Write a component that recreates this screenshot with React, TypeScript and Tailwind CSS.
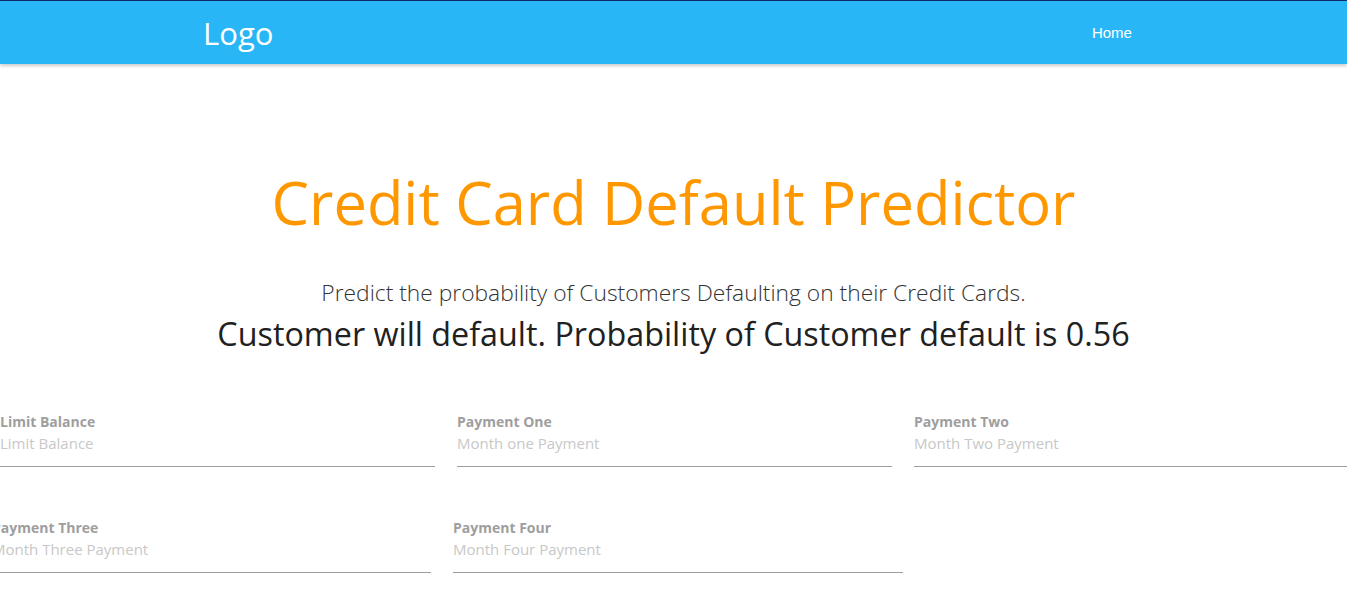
import React from "react";

const font = { fontFamily: '"Open Sans", "Noto Sans", sans-serif' };

function Field({ label, placeholder, className }: { label: string; placeholder: string; className: string }) {
  return (
    <div className={className}>
      <div className="text-[14px] font-bold leading-[20px] text-[#9e9e9e]">{label}</div>
      <div className="h-[35px] border-b border-[#9e9e9e] text-[15px] leading-[22px] text-[#c8c8c8]">{placeholder}</div>
    </div>
  );
}

export default function App() {
  return (
    <div className="min-h-[607px] overflow-hidden bg-white" style={font}>
      <nav className="h-16 border-t border-[#0d2a6a] bg-[#29b6f6] shadow-[0_2px_3px_rgba(0,0,0,0.2)]">
        <div className="mx-auto flex h-full w-[70%] items-center justify-between">
          <a className="ml-px mt-[2px] text-[31px] leading-none text-white">Logo</a>
          <a className="mt-[2px] pl-[15px] pr-[13px] text-[15px] text-white" style={{ fontFamily: '"Liberation Sans", Arial, sans-serif' }}>Home</a>
        </div>
      </nav>
      <main>
        <h1 className="mt-[98px] whitespace-nowrap text-center text-[59.6px] leading-[80px] text-[#ff9800]">
          Credit Card Default Predictor
        </h1>
        <p className="mt-[35px] whitespace-nowrap text-center text-[22.8px] font-light leading-[32px] text-[#333]">
          Predict the probability of Customers Defaulting on their Credit Cards.
        </p>
        <p className="mt-[3px] whitespace-nowrap text-center text-[32.3px] leading-[42px] text-[#212121]">
          Customer will default. Probability of Customer default is 0.56
        </p>
        <div className="mt-[58px] flex gap-[22px]">
          <Field className="w-[435px] shrink-0" label="Limit Balance" placeholder="Limit Balance" />
          <Field className="w-[435px] shrink-0" label="Payment One" placeholder="Month one Payment" />
          <Field className="w-[435px] shrink-0" label="Payment Two" placeholder="Month Two Payment" />
        </div>
        <div className="ml-[-8px] mt-[51px] flex gap-[22px]">
          <Field className="w-[439px] shrink-0" label="Payment Three" placeholder="Month Three Payment" />
          <Field className="w-[450px] shrink-0" label="Payment Four" placeholder="Month Four Payment" />
        </div>
      </main>
    </div>
  );
}
